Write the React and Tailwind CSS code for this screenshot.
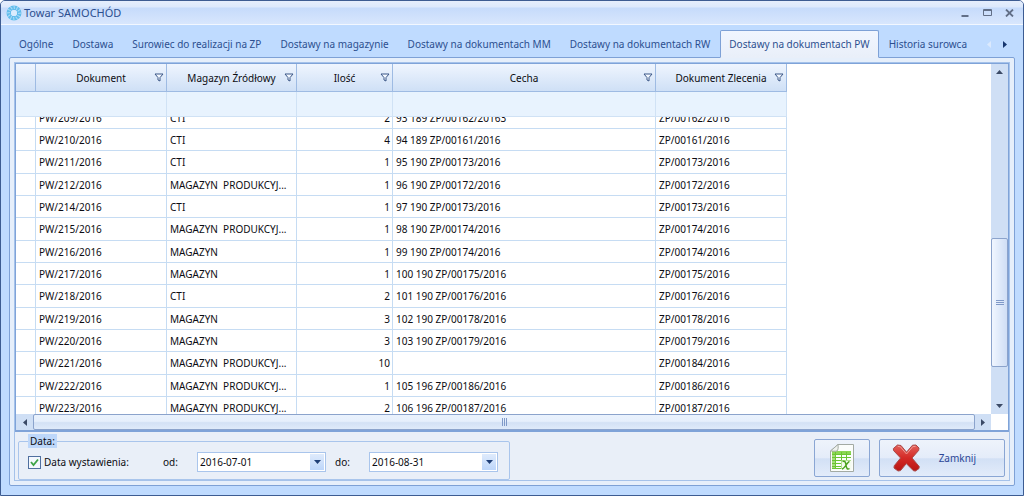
import React, { useLayoutEffect, useRef, useState } from "react";

const TABS = [
  "Ogólne",
  "Dostawa",
  "Surowiec do realizacji na ZP",
  "Dostawy na magazynie",
  "Dostawy na dokumentach MM",
  "Dostawy na dokumentach RW",
  "Dostawy na dokumentach PW",
  "Historia surowca",
];

const COLUMNS = ["Dokument", "Magazyn Źródłowy", "Ilość", "Cecha", "Dokument Zlecenia"];

const ROWS = [
  ["PW/209/2016", "CTI", "2", "93 189 ZP/00162/20163", "ZP/00162/2016"],
  ["PW/210/2016", "CTI", "4", "94 189 ZP/00161/2016", "ZP/00161/2016"],
  ["PW/211/2016", "CTI", "1", "95 190 ZP/00173/2016", "ZP/00173/2016"],
  ["PW/212/2016", "MAGAZYN  PRODUKCYJ...", "1", "96 190 ZP/00172/2016", "ZP/00172/2016"],
  ["PW/214/2016", "CTI", "1", "97 190 ZP/00173/2016", "ZP/00173/2016"],
  ["PW/215/2016", "MAGAZYN  PRODUKCYJ...", "1", "98 190 ZP/00174/2016", "ZP/00174/2016"],
  ["PW/216/2016", "MAGAZYN", "1", "99 190 ZP/00174/2016", "ZP/00174/2016"],
  ["PW/217/2016", "MAGAZYN", "1", "100 190 ZP/00175/2016", "ZP/00175/2016"],
  ["PW/218/2016", "CTI", "2", "101 190 ZP/00176/2016", "ZP/00176/2016"],
  ["PW/219/2016", "MAGAZYN", "3", "102 190 ZP/00178/2016", "ZP/00178/2016"],
  ["PW/220/2016", "MAGAZYN", "3", "103 190 ZP/00179/2016", "ZP/00179/2016"],
  ["PW/221/2016", "MAGAZYN  PRODUKCYJ...", "10", "", "ZP/00184/2016"],
  ["PW/222/2016", "MAGAZYN  PRODUKCYJ...", "1", "105 196 ZP/00186/2016", "ZP/00186/2016"],
  ["PW/223/2016", "MAGAZYN  PRODUKCYJ...", "2", "106 196 ZP/00187/2016", "ZP/00187/2016"],
];

function Arrow({ dir, className = "" }) {
  const d = {
    up: "M0 4 L3.5 0 L7 4 Z",
    down: "M0 0 L7 0 L3.5 4 Z",
    left: "M4 0 L4 7 L0 3.5 Z",
    right: "M0 0 L4 3.5 L0 7 Z",
  }[dir];
  const wide = dir === "up" || dir === "down";
  return (
    <svg
      width={wide ? 7 : 4}
      height={wide ? 4 : 7}
      viewBox={wide ? "0 0 7 4" : "0 0 4 7"}
      fill="currentColor"
      className={className}
      aria-hidden="true"
    >
      <path d={d} />
    </svg>
  );
}

function AppIcon() {
  const petals = Array.from({ length: 12 }, (_, i) => i * 30);
  return (
    <svg width="16" height="16" viewBox="0 0 16 16" className="shrink-0" aria-hidden="true">
      <circle cx="8" cy="8" r="5.3" fill="none" stroke="#62bdec" strokeWidth="4.4" />
      {petals.map((a) => (
        <path
          key={a}
          d="M8 0.4 L8.4 4"
          stroke="#b5e0f8"
          strokeWidth="0.9"
          transform={`rotate(${a} 8 8)`}
        />
      ))}
      <circle cx="8" cy="8" r="3" fill="#d9ecfd" />
    </svg>
  );
}

function FilterIcon() {
  return (
    <svg width="10" height="9" viewBox="0 0 10 9" fill="#f4f9ff" stroke="#3a5687" aria-hidden="true">
      <path d="M1 1 H9 L6 4.6 V8 L4 7 V4.6 Z" />
    </svg>
  );
}

function SheetIcon() {
  return (
    <svg width="26" height="30" viewBox="0 0 26 30" aria-hidden="true">
      <path d="M9 1.5 H24.5 V28.5 H1.5 V8 Z" fill="#fbfdfb" stroke="#a3aaa3" />
      <path d="M3 8 H22 V11 H3 Z" fill="#8bd653" />
      <path d="M3 11 H6 V26 H3 Z" fill="#a6dd7c" />
      <path
        d="M3 11.5 H22 M3 14.5 H22 M3 17.5 H22 M3 20.5 H14 M3 23.5 H13 M3 25.5 H13 M6.5 9 V26 M12.5 9 V26 M17.5 9 V17"
        stroke="#6cc534"
        fill="none"
      />
      <path d="M7 15 H12 V17 H7 Z M7 21 H12 V23 H7 Z M13 12 H17 V14 H13 Z" fill="#fbfdfb" />
      <path d="M9 1.5 C9.5 5 9 7 8 8 C6 8.5 3 8 1.5 8 Z" fill="#eef1ee" stroke="#a3aaa3" />
      <path d="M12.5 17.5 H22.5 V27 H12.5 Z" fill="#f4fbef" />
      <path
        d="M13.5 18.5 C16 17.5 16.5 19 17 22 C17.5 25.5 18.5 27 20.5 25.5 M20.5 18.5 C18.5 18.5 16 25.5 13 26"
        fill="none"
        stroke="#4aa21f"
        strokeWidth="1.5"
      />
    </svg>
  );
}

function CrossIcon() {
  return (
    <svg width="28" height="28" viewBox="0 0 28 28" className="shrink-0" aria-hidden="true">
      <defs>
        <linearGradient id="crossFill" x1="0" y1="0" x2="0" y2="1">
          <stop offset="0" stopColor="#e2605a" />
          <stop offset="0.5" stopColor="#d42a26" />
          <stop offset="1" stopColor="#b81513" />
        </linearGradient>
      </defs>
      <path
        d="M5.5 1 L9 1.5 L14.5 8.2 L20.5 1.2 L24 1 L27 4 L26.6 6.5 L20 14 L27.2 22.5 L27 24.5 L23.5 27 L21.5 26.8 L14.3 19.6 L8.5 26.6 L6 27 L2 24 L2.2 21.8 L8.6 14 L1.5 6.5 L1.4 4.5 Z"
        fill="url(#crossFill)"
        stroke="#a84a48"
        strokeLinejoin="round"
      />
      <path d="M5.8 2.4 L8.4 2.8 L14.5 10 L20.8 2.6 L23.6 2.4" fill="none" stroke="#f09a93" />
    </svg>
  );
}

function ScrollButton({ dir, label, className }) {
  return (
    <button
      type="button"
      aria-label={label}
      className={`flex shrink-0 items-center justify-center text-[#3b4a66] ${className}`}
    >
      <Arrow dir={dir} />
    </button>
  );
}

function DateField({ id, label, value }) {
  return (
    <div className="flex items-center">
      <label htmlFor={id} className="w-[34px]">
        {label}
      </label>
      <div className="flex h-5 w-[129px] border border-[#a9c5ec] bg-white">
        <input
          id={id}
          type="text"
          defaultValue={value}
          className="min-w-0 flex-1 bg-transparent px-0.5 outline-none"
        />
        <button
          type="button"
          aria-label={`Wybierz datę ${label}`}
          className="m-px flex w-[14px] items-center justify-center bg-linear-to-b from-[#dfebfc] to-[#bdd6fa] text-[#1f3f77]"
        >
          <Arrow dir="down" />
        </button>
      </div>
    </div>
  );
}

const ACTION =
  "flex h-[38px] items-center rounded-[2px] border border-[#8aa6d4] bg-[linear-gradient(#eef3fb_0%,#e4ecf9_50%,#d2e0f5_52%,#e3ecfa_100%)]";

export default function App() {
  const gridRef = useRef(null);
  const [active, setActive] = useState(6);

  useLayoutEffect(() => {
    gridRef.current.scrollTop = 10;
  }, []);

  return (
    <div className="flex h-screen flex-col overflow-hidden rounded-t-[5px] border border-[#3d5c92] bg-[#bfdbff] font-['Noto_Sans','Open_Sans',sans-serif] text-[10px] leading-4 text-[#0c0c12]">
      <header className="flex h-6 shrink-0 items-center border-b border-[#f2f7ff] bg-[linear-gradient(#e6eefc_0px,#dde9fc_6px,#c6dbfb_7px,#d9e7fd_24px)] pr-1 pl-[5px] text-[#2c4f8f]">
        <AppIcon />
        <h1 className="ml-0.5 flex-1 text-[11px]">Towar SAMOCHÓD</h1>
        <div className="flex items-center gap-0.5 text-[#626f87]">
          <button type="button" aria-label="Minimalizuj" className="flex h-4 w-5 items-center justify-center">
            <svg width="8" height="9" viewBox="0 0 8 9" aria-hidden="true">
              <path d="M0.5 8 H7.5" stroke="currentColor" strokeWidth="2" />
            </svg>
          </button>
          <button type="button" aria-label="Maksymalizuj" className="flex h-4 w-5 items-center justify-center">
            <svg width="9" height="7" viewBox="0 0 9 7" fill="none" stroke="currentColor" aria-hidden="true">
              <path d="M0.5 0.5 H8.5 V6.5 H0.5 Z M0 1.5 H9" />
            </svg>
          </button>
          <button type="button" aria-label="Zamknij okno" className="flex h-4 w-5 items-center justify-center">
            <svg width="9" height="8" viewBox="0 0 9 8" stroke="currentColor" strokeWidth="1.8" aria-hidden="true">
              <path d="M1 0.5 L8 7.5 M8 0.5 L1 7.5" />
            </svg>
          </button>
        </div>
      </header>

      <main className="flex min-h-0 flex-1 flex-col px-2 pt-[5px] pb-[9px]">
        <nav role="tablist" className="z-10 -mb-px flex h-7 shrink-0 items-stretch gap-px pl-px text-[#2c4f8f]">
          {TABS.map((tab, i) => (
            <button
              key={tab}
              type="button"
              role="tab"
              aria-selected={i === active}
              onClick={() => setActive(i)}
              className={`shrink-0 rounded-t-[2px] border px-2 whitespace-nowrap ${
                i === active
                  ? "border-[#7ea1d6] border-b-[#e9eff9] bg-linear-to-b from-[#f1f6ff] to-[#e9eff9]"
                  : "border-transparent"
              }`}
            >
              {tab}
            </button>
          ))}
          <div className="ml-auto flex items-center gap-1 pr-1">
            <button type="button" aria-label="Poprzednie zakładki" className="px-1 text-[#dbe9fd]">
              <Arrow dir="left" />
            </button>
            <button type="button" aria-label="Następne zakładki" className="px-1 text-[#16356e]">
              <Arrow dir="right" />
            </button>
          </div>
        </nav>

        <section className="flex min-h-0 flex-1 flex-col rounded-[2px] border border-[#7ea1d6] bg-[#e6effb] p-1">
          <div className="flex min-h-0 flex-1 flex-col border border-[#a5c2ea] bg-[#e9eff8]">
            <div className="flex min-h-0 flex-1 flex-col border border-b-2 border-[#7fa3d8] bg-white">
              <div className="flex min-h-0 flex-1">
                <div
                  ref={gridRef}
                  className="min-w-0 flex-1 overflow-x-hidden overflow-y-auto [scrollbar-width:none]"
                >
                  <table className="w-[771px] table-fixed border-separate border-spacing-0">
                    <colgroup>
                      <col className="w-5" />
                      <col className="w-[131px]" />
                      <col className="w-[130px]" />
                      <col className="w-24" />
                      <col className="w-[263px]" />
                      <col className="w-[131px]" />
                    </colgroup>
                    <thead className="sticky top-0">
                      <tr className="h-7">
                        <td className="border-r border-b border-[#9ebbe3] bg-linear-to-b from-[#eff5fe] to-[#cfe0f6]" />
                        {COLUMNS.map((name) => (
                          <th
                            key={name}
                            scope="col"
                            className="border-r border-b border-[#9ebbe3] bg-linear-to-b from-[#eff5fe] to-[#cfe0f6] p-0 font-normal"
                          >
                            <div className="flex items-center pr-0.5 pl-3">
                              <span className="flex-1 text-center whitespace-nowrap">{name}</span>
                              <button type="button" aria-label={`Filtruj: ${name}`} className="shrink-0">
                                <FilterIcon />
                              </button>
                            </div>
                          </th>
                        ))}
                      </tr>
                      <tr className="h-[25px]">
                        <td className="border-b border-[#d0e2f5] bg-[#e8f3fe]" />
                        {COLUMNS.map((name) => (
                          <td key={name} className="border-r border-b border-[#d0e2f5] bg-[#e8f3fe]" />
                        ))}
                      </tr>
                    </thead>
                    <tbody>
                      {ROWS.map((row) => (
                        <tr key={row[0]} className="h-[22px] nth-[3n]:h-[23px]">
                          <td className="border-r border-b border-[#c6dcf3]" />
                          {row.map((cell, i) => (
                            <td
                              key={i}
                              className={`overflow-hidden border-r border-b border-[#c6dcf3] py-0 pr-0.5 pl-[3px] whitespace-pre ${
                                i === 2 ? "text-right" : ""
                              }`}
                            >
                              {cell}
                            </td>
                          ))}
                        </tr>
                      ))}
                    </tbody>
                  </table>
                </div>
                <div className="flex w-[17px] shrink-0 flex-col bg-[#cfdff5]">
                  <ScrollButton dir="up" label="Przewiń w górę" className="h-4" />
                  <div className="flex-[159]" />
                  <div className="flex flex-[128] flex-col items-center justify-center gap-px rounded-[2px] border border-[#8ba3cc] bg-linear-to-r from-[#f0f6ff] to-[#cfdef5]">
                    <span className="h-px w-2 bg-[#7f99c8]" />
                    <span className="h-px w-2 bg-[#7f99c8]" />
                    <span className="h-px w-2 bg-[#7f99c8]" />
                  </div>
                  <div className="flex-[31]" />
                  <ScrollButton dir="down" label="Przewiń w dół" className="h-4" />
                </div>
              </div>
              <div className="flex h-4 shrink-0 bg-[#cfdff5]">
                <ScrollButton dir="left" label="Przewiń w lewo" className="w-[17px]" />
                <div className="flex flex-1 items-center justify-center gap-px rounded-[2px] border border-[#8ba3cc] bg-[linear-gradient(#eaf2fd_0%,#e6effc_45%,#d3e1f5_55%,#dfeafa_100%)]">
                  <span className="h-2 w-px bg-[#7f99c8]" />
                  <span className="h-2 w-px bg-[#7f99c8]" />
                  <span className="h-2 w-px bg-[#7f99c8]" />
                </div>
                <ScrollButton dir="right" label="Przewiń w prawo" className="w-4" />
                <div className="w-[17px] bg-white" />
              </div>
            </div>

            <footer className="flex h-12 shrink-0 items-start justify-between pr-1 pl-[3px]">
              <fieldset className="mt-0.5 h-[46px] w-[492px] rounded-[2px] border border-[#a9c5ec] pl-[9px]">
                <legend className="bg-[#bdd7fa] px-0.5 leading-[14px]">Data:</legend>
                <div className="flex items-center pt-1">
                  <label className="flex w-[135px] items-center gap-[3px]">
                    <input
                      type="checkbox"
                      defaultChecked
                      className="peer size-[13px] appearance-none border border-[#4f6f9f] bg-[#f4f8fe]"
                    />
                    <svg
                      width="9"
                      height="9"
                      viewBox="0 0 9 9"
                      className="pointer-events-none -ml-[14px] mr-0.5 hidden peer-checked:block"
                      aria-hidden="true"
                    >
                      <path d="M1 4 L3.5 7 L8 1.5" fill="none" stroke="#3da447" strokeWidth="1.8" />
                    </svg>
                    <span>Data wystawienia:</span>
                  </label>
                  <DateField id="date-from" label="od:" value="2016-07-01" />
                  <div className="w-[9px]" />
                  <DateField id="date-to" label="do:" value="2016-08-31" />
                </div>
              </fieldset>
              <div className="flex gap-[9px] pt-[7px] text-[#2c4796]">
                <button type="button" aria-label="Eksportuj do arkusza" className={`${ACTION} w-14 justify-center`}>
                  <SheetIcon />
                </button>
                <button type="button" className={`${ACTION} w-[126px] pr-7 pl-3`}>
                  <CrossIcon />
                  <span className="flex-1 text-right">Zamknij</span>
                </button>
              </div>
            </footer>
          </div>
        </section>
      </main>
    </div>
  );
}
